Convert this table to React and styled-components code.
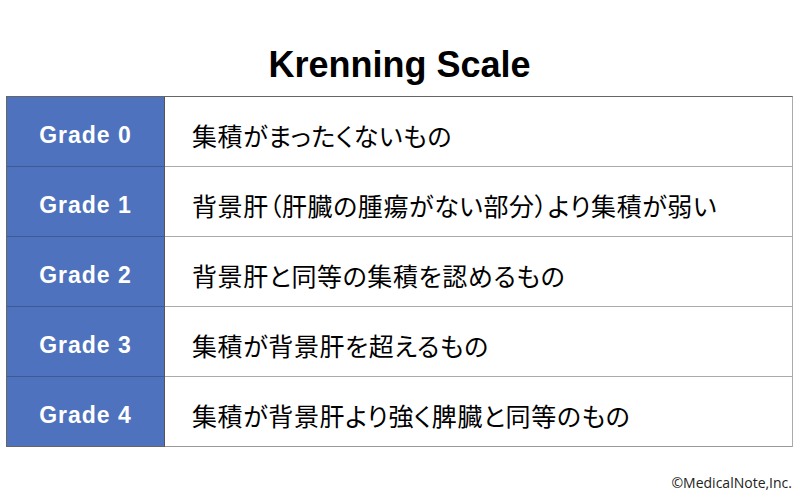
import React from 'react';
import styled, { createGlobalStyle } from 'styled-components';

const GlobalStyle = createGlobalStyle`
  html, body {
    margin: 0;
    padding: 0;
    background: #ffffff;
  }
  body {
    font-family: "Noto Sans CJK JP", "Noto Sans", sans-serif;
  }
`;

const Page = styled.div`
  width: 800px;
  height: 500px;
  box-sizing: border-box;
  padding: 40px 7px 0 6px;
  display: flex;
  flex-direction: column;
  background: #fff;
`;

const Title = styled.h1`
  margin: 0;
  height: 56px;
  text-align: center;
  font-family: "Liberation Sans", "Noto Sans CJK JP", sans-serif;
  font-size: 36px;
  font-weight: bold;
  line-height: 50px;
  color: #000;
`;

const Table = styled.div`
  display: grid;
  grid-template-columns: 158px 1fr;
  border-top: 1px solid #666;
  border-left: 1px solid #666;
  border-right: 1px solid #aaa;
`;

const GradeCell = styled.div`
  height: 70px;
  box-sizing: border-box;
  display: flex;
  align-items: center;
  justify-content: center;
  background: #4e72bd;
  color: #fff;
  font-family: "Liberation Sans", sans-serif;
  font-weight: bold;
  font-size: 23px;
  letter-spacing: 1px;
  border-bottom: 1px solid ${p => (p.last ? '#666' : '#3f5a93')};
  border-right: 1px solid #555;
  padding-top: 8px;
`;

const TextCell = styled.div`
  height: 70px;
  box-sizing: border-box;
  display: flex;
  align-items: center;
  padding-left: 27px;
  padding-top: 6px;
  font-family: "Noto Sans CJK JP", sans-serif;
  font-size: 25px;
  font-feature-settings: "palt";
  letter-spacing: 0.6px;
  color: #000;
  border-bottom: 1px solid ${p => (p.last ? '#999' : '#aaa')};
  white-space: nowrap;
`;

const Footer = styled.div`
  margin-top: 26px;
  text-align: right;
  font-family: "Open Sans", "Noto Sans", sans-serif;
  font-size: 14px;
  color: #222;
  padding-right: 1px;
`;

const rows = [
  ['Grade 0', '集積がまったくないもの'],
  ['Grade 1', '背景肝（肝臓の腫瘍がない部分）より集積が弱い'],
  ['Grade 2', '背景肝と同等の集積を認めるもの'],
  ['Grade 3', '集積が背景肝を超えるもの'],
  ['Grade 4', '集積が背景肝より強く脾臓と同等のもの'],
];

export default function App() {
  return (
    <>
      <GlobalStyle />
      <Page>
        <Title>Krenning Scale</Title>
        <Table>
          {rows.map(([grade, text], i) => (
            <React.Fragment key={grade}>
              <GradeCell last={i === rows.length - 1}>{grade}</GradeCell>
              <TextCell last={i === rows.length - 1}>{text}</TextCell>
            </React.Fragment>
          ))}
        </Table>
        <Footer>©MedicalNote,Inc.</Footer>
      </Page>
    </>
  );
}
